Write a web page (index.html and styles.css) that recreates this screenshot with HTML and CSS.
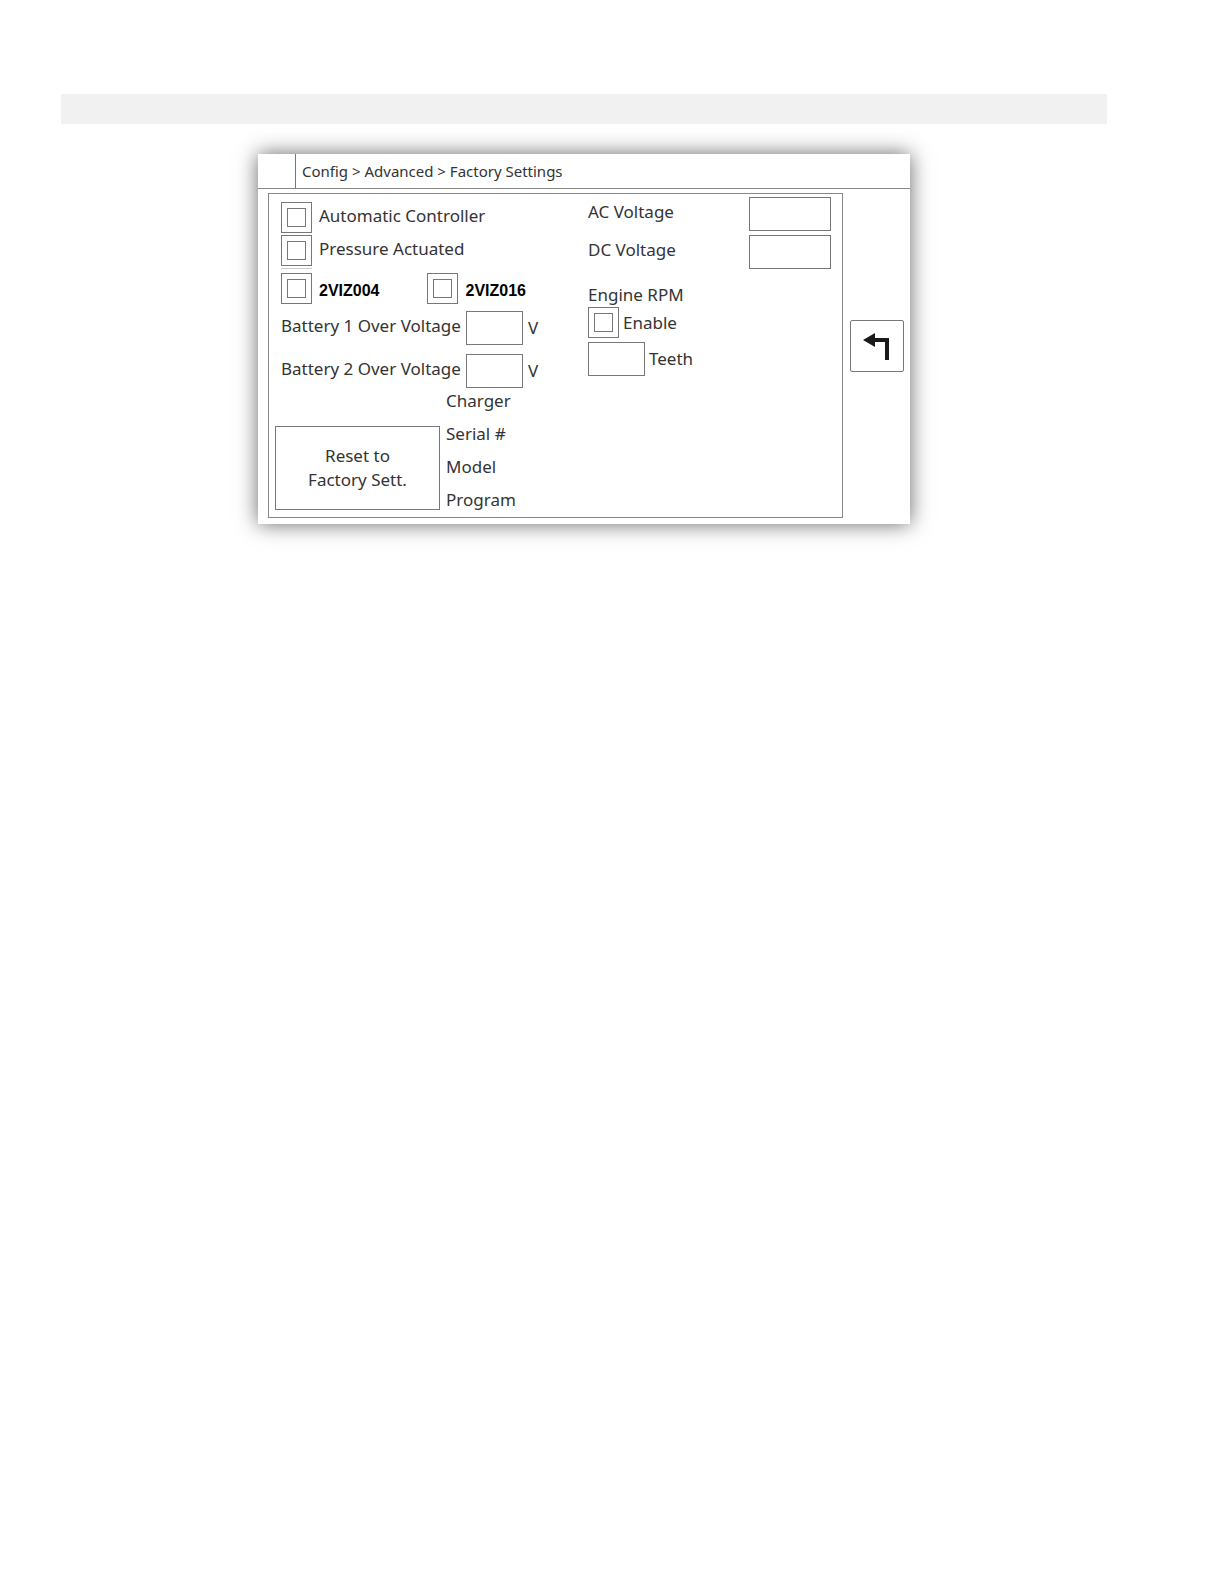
FILE: index.html
```html
<!DOCTYPE html>
<html lang="en">
<head>
  <meta charset="UTF-8">
  <meta name="viewport" content="width=device-width, initial-scale=1">
  <title>Factory Settings</title>
  <link rel="stylesheet" href="styles.css">
</head>
<body>
  <div class="page">
    <div class="bar"></div>

    <main class="screen">
      <header class="header">
        <div class="header-icon"></div>
        <div class="breadcrumb">Config &gt; Advanced &gt; Factory Settings</div>
      </header>

      <div class="content">
        <form class="panel">
          <div class="left">
            <div class="row">
              <input type="checkbox" class="check" id="automatic">
              <label class="raised" for="automatic">Automatic Controller</label>
            </div>
            <div class="row pressure">
              <input type="checkbox" class="check underlined" id="pressure">
              <label class="raised" for="pressure">Pressure Actuated</label>
            </div>
            <div class="row models">
              <div class="row model">
                <input type="checkbox" class="check" id="viz004">
                <label for="viz004">2VIZ004</label>
              </div>
              <div class="row model">
                <input type="checkbox" class="check" id="viz016">
                <label for="viz016">2VIZ016</label>
              </div>
            </div>
            <div class="row battery">
              <label class="raised" for="battery1">Battery 1 Over Voltage</label>
              <input type="text" class="box small" id="battery1">
              <span>V</span>
            </div>
            <div class="row battery">
              <label class="raised" for="battery2">Battery 2 Over Voltage</label>
              <input type="text" class="box small" id="battery2">
              <span>V</span>
            </div>
            <div class="bottom">
              <button type="button" class="reset">Reset to<br>Factory Sett.</button>
              <ul class="info">
                <li>Charger</li>
                <li>Serial #</li>
                <li>Model</li>
                <li>Program</li>
              </ul>
            </div>
          </div>

          <div class="right">
            <div class="row voltage">
              <label class="raised" for="ac">AC Voltage</label>
              <input type="text" class="box" id="ac">
            </div>
            <div class="row voltage">
              <label class="raised" for="dc">DC Voltage</label>
              <input type="text" class="box" id="dc">
            </div>
            <div class="rpm-title">Engine RPM</div>
            <div class="row rpm">
              <input type="checkbox" class="check" id="enable">
              <label for="enable">Enable</label>
            </div>
            <div class="row rpm">
              <input type="text" class="box small" id="teeth">
              <label for="teeth">Teeth</label>
            </div>
          </div>
        </form>

        <nav class="side">
          <button type="button" class="back" aria-label="Back">
            <svg width="28" height="28" viewBox="0 0 28 28">
              <path d="M0 8 L12 1 V6 H26 V28 H22 V10 H12 V15 Z" fill="#1a1a1a"/>
            </svg>
          </button>
        </nav>
      </div>
    </main>
  </div>
</body>
</html>
```

FILE: styles.css
```css
* {
  box-sizing: border-box;
}
body {
  margin: 0;
  background: #fff;
  color: #333;
  font-family: "Noto Sans", sans-serif;
  font-size: 17px;
  line-height: 24px;
}
.page {
  padding: 94px 117px 60px 61px;
}
.bar {
  height: 30px;
  margin-bottom: 30px;
  background: #f1f1f1;
}
.screen {
  max-width: 652px;
  margin: 0 auto;
  background: #fff;
  box-shadow: 0 0 20px rgba(0, 0, 0, 0.6);
}
.header {
  display: flex;
  height: 35px;
  border-bottom: 1px solid #888;
}
.header-icon {
  width: 38px;
  border-right: 1px solid #777;
}
.breadcrumb {
  padding: 5px 6px;
  font-size: 15px;
}
.content {
  display: flex;
  padding: 4px 6px 6px 10px;
}
.panel {
  flex: 1;
  display: flex;
  border: 1px solid #888;
}
.left {
  width: 319px;
  padding: 8px 0 5px 12px;
}
.right {
  flex: 1;
  padding: 3px 11px 0 0;
}
.row {
  display: flex;
  align-items: center;
  gap: 7px;
  white-space: nowrap;
}
.raised {
  padding-bottom: 4px;
}
.check {
  appearance: none;
  flex: none;
  display: grid;
  place-content: center;
  width: 31px;
  height: 31px;
  margin: 0;
  border: 1px solid #777;
  background: #fff;
}
.check::before {
  content: "";
  width: 17px;
  height: 17px;
  border: 1px solid #777;
}
.check:checked::before {
  background: #555;
}
.underlined {
  box-shadow: 0 2px 0 #fff, 0 3px 0 #ccc;
}
.box {
  width: 82px;
  height: 34px;
  padding: 0 6px;
  border: 1px solid #777;
  background: #fff;
  color: inherit;
  font: inherit;
}
.small {
  width: 57px;
}
.pressure {
  margin-top: 2px;
}
.models {
  margin: 7px 0;
  gap: 48px;
}
.model {
  color: #000;
  font-family: "Liberation Sans", Arial, sans-serif;
  font-size: 16px;
  font-weight: bold;
}
.model label {
  padding-top: 4px;
}
.battery {
  gap: 5px;
  margin-bottom: 9px;
}
.battery label {
  width: 180px;
}
.bottom {
  display: flex;
  align-items: flex-end;
  gap: 6px;
  margin: -8px 0 0 -6px;
}
.reset {
  width: 165px;
  height: 84px;
  margin-bottom: 2px;
  padding: 0;
  border: 1px solid #777;
  background: #fff;
  color: inherit;
  font: inherit;
  cursor: pointer;
}
.info {
  display: flex;
  flex-direction: column;
  gap: 9px;
  margin: 0;
  padding: 0;
  list-style: none;
}
.voltage {
  justify-content: space-between;
  margin-bottom: 4px;
}
.rpm-title {
  margin-top: 14px;
}
.rpm {
  gap: 4px;
  margin-bottom: 4px;
}
.side {
  display: flex;
  align-items: flex-start;
  padding: 127px 0 0 7px;
}
.back {
  display: grid;
  place-content: center;
  width: 54px;
  height: 52px;
  padding: 0;
  border: 1px solid #777;
  border-radius: 2px;
  background: #fff;
  cursor: pointer;
}
```
